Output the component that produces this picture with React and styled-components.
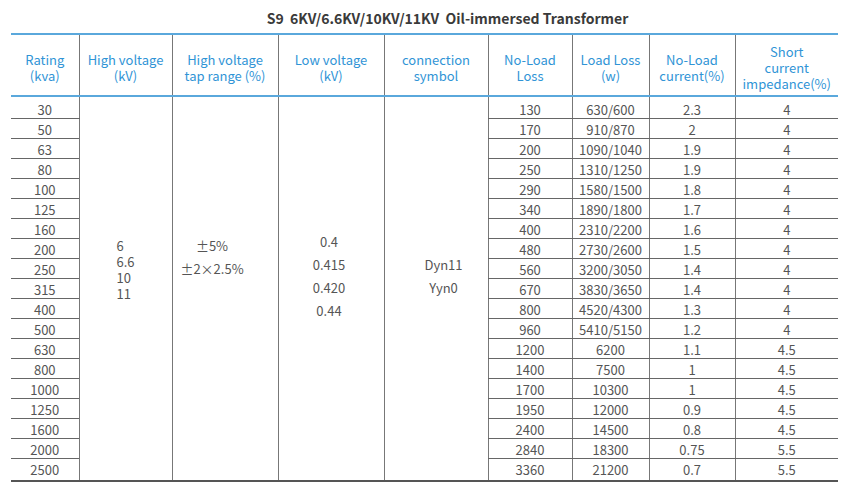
import React from "react";
import styled, { createGlobalStyle } from "styled-components";

const Global = createGlobalStyle`
  html, body { margin: 0; padding: 0; background: #fff; }
  body { font-family: "Noto Sans CJK SC", "Noto Sans", sans-serif; }
`;

const Page = styled.div`
  width: 853px;
  height: 489px;
  padding: 7px 0 0 11px;
  box-sizing: border-box;
`;

const Title = styled.div`
  width: 827px;
  padding-left: 46px;
  box-sizing: border-box;
  text-align: center;
  font-size: 14px;
  font-weight: 700;
  line-height: 22px;
  color: #3a3a3a;
  white-space: pre;
  margin-bottom: 4px;
`;

const Table = styled.table`
  width: 827px;
  border-collapse: collapse;
  table-layout: fixed;
  border-top: 2px solid #5aa8dc;
  font-size: 13px;
  color: #555;
`;

const Th = styled.th`
  height: 55px;
  padding: 5px 1px 0;
  font-weight: 400;
  font-size: 13px;
  line-height: 16px;
  color: #3094d6;
  text-align: center;
  vertical-align: middle;
  border-bottom: 2px solid #5aa8dc;
  border-left: ${(p) => (p.$first ? "none" : "1px solid #777")};
`;

const Td = styled.td`
  height: ${(p) => p.$h}px;
  padding: 0 0 ${(p) => (p.$last ? 2 : 0)}px;
  line-height: 16px;
  text-align: center;
  vertical-align: bottom;
  border-bottom: ${(p) => (p.$last ? "2px solid #555" : "1px solid #666")};
  border-left: ${(p) => (p.$first ? "none" : "1px solid #777")};
`;

const Merged = styled.td`
  padding: ${(p) => p.$top}px ${(p) => p.$right || 0}px 0 ${(p) => p.$left || 0}px;
  text-align: ${(p) => p.$align};
  vertical-align: top;
  line-height: ${(p) => p.$lh}px;
  border-left: 1px solid #777;
  border-bottom: 2px solid #555;
`;

const Line = styled.div`
  white-space: nowrap;
`;

const rows = [
  ["30", "130", "630/600", "2.3", "4"],
  ["50", "170", "910/870", "2", "4"],
  ["63", "200", "1090/1040", "1.9", "4"],
  ["80", "250", "1310/1250", "1.9", "4"],
  ["100", "290", "1580/1500", "1.8", "4"],
  ["125", "340", "1890/1800", "1.7", "4"],
  ["160", "400", "2310/2200", "1.6", "4"],
  ["200", "480", "2730/2600", "1.5", "4"],
  ["250", "560", "3200/3050", "1.4", "4"],
  ["315", "670", "3830/3650", "1.4", "4"],
  ["400", "800", "4520/4300", "1.3", "4"],
  ["500", "960", "5410/5150", "1.2", "4"],
  ["630", "1200", "6200", "1.1", "4.5"],
  ["800", "1400", "7500", "1", "4.5"],
  ["1000", "1700", "10300", "1", "4.5"],
  ["1250", "1950", "12000", "0.9", "4.5"],
  ["1600", "2400", "14500", "0.8", "4.5"],
  ["2000", "2840", "18300", "0.75", "5.5"],
  ["2500", "3360", "21200", "0.7", "5.5"],
];

const widths = [68, 93, 106, 106, 104, 84, 77, 86, 103];

const headers = [
  ["Rating", "(kva)"],
  ["High voltage", "(kV)"],
  ["High voltage", "tap range (%)"],
  ["Low voltage", "(kV)"],
  ["connection", "symbol"],
  ["No-Load", "Loss"],
  ["Load Loss", "(w)"],
  ["No-Load", "current(%)"],
  ["Short", "current", "impedance(%)"],
];

export default function App() {
  const n = rows.length;
  return (
    <>
      <Global />
      <Page>
        <Title>{"S9  6KV/6.6KV/10KV/11KV  Oil-immersed Transformer"}</Title>
        <Table>
          <colgroup>
            {widths.map((w, i) => (
              <col key={i} style={{ width: w }} />
            ))}
          </colgroup>
          <thead>
            <tr>
              {headers.map((h, i) => (
                <Th key={i} $first={i === 0}>
                  {h.map((l, j) => (
                    <Line key={j}>{l}</Line>
                  ))}
                </Th>
              ))}
            </tr>
          </thead>
          <tbody>
            {rows.map((r, i) => {
              const last = i === n - 1;
              const h = i === 0 ? 21 : last ? 19 : 19;
              return (
                <tr key={i}>
                  <Td $first $h={h} $last={last}>{r[0]}</Td>
                  {i === 0 && (
                    <>
                      <Merged rowSpan={n} $top={141} $lh={16} $align="left" $left={37}>
                        <Line>6</Line>
                        <Line>6.6</Line>
                        <Line>10</Line>
                        <Line>11</Line>
                      </Merged>
                      <Merged rowSpan={n} $top={137} $lh={23} $align="center" $right={26}>
                        <Line>±5%</Line>
                        <Line>±2×2.5%</Line>
                      </Merged>
                      <Merged rowSpan={n} $top={133} $lh={23} $align="center" $right={4}>
                        <Line>0.4</Line>
                        <Line>0.415</Line>
                        <Line>0.420</Line>
                        <Line>0.44</Line>
                      </Merged>
                      <Merged rowSpan={n} $top={156} $lh={23} $align="center" $left={15}>
                        <Line>Dyn11</Line>
                        <Line>Yyn0</Line>
                      </Merged>
                    </>
                  )}
                  <Td $h={h} $last={last}>{r[1]}</Td>
                  <Td $h={h} $last={last}>{r[2]}</Td>
                  <Td $h={h} $last={last}>{r[3]}</Td>
                  <Td $h={h} $last={last}>{r[4]}</Td>
                </tr>
              );
            })}
          </tbody>
        </Table>
      </Page>
    </>
  );
}
